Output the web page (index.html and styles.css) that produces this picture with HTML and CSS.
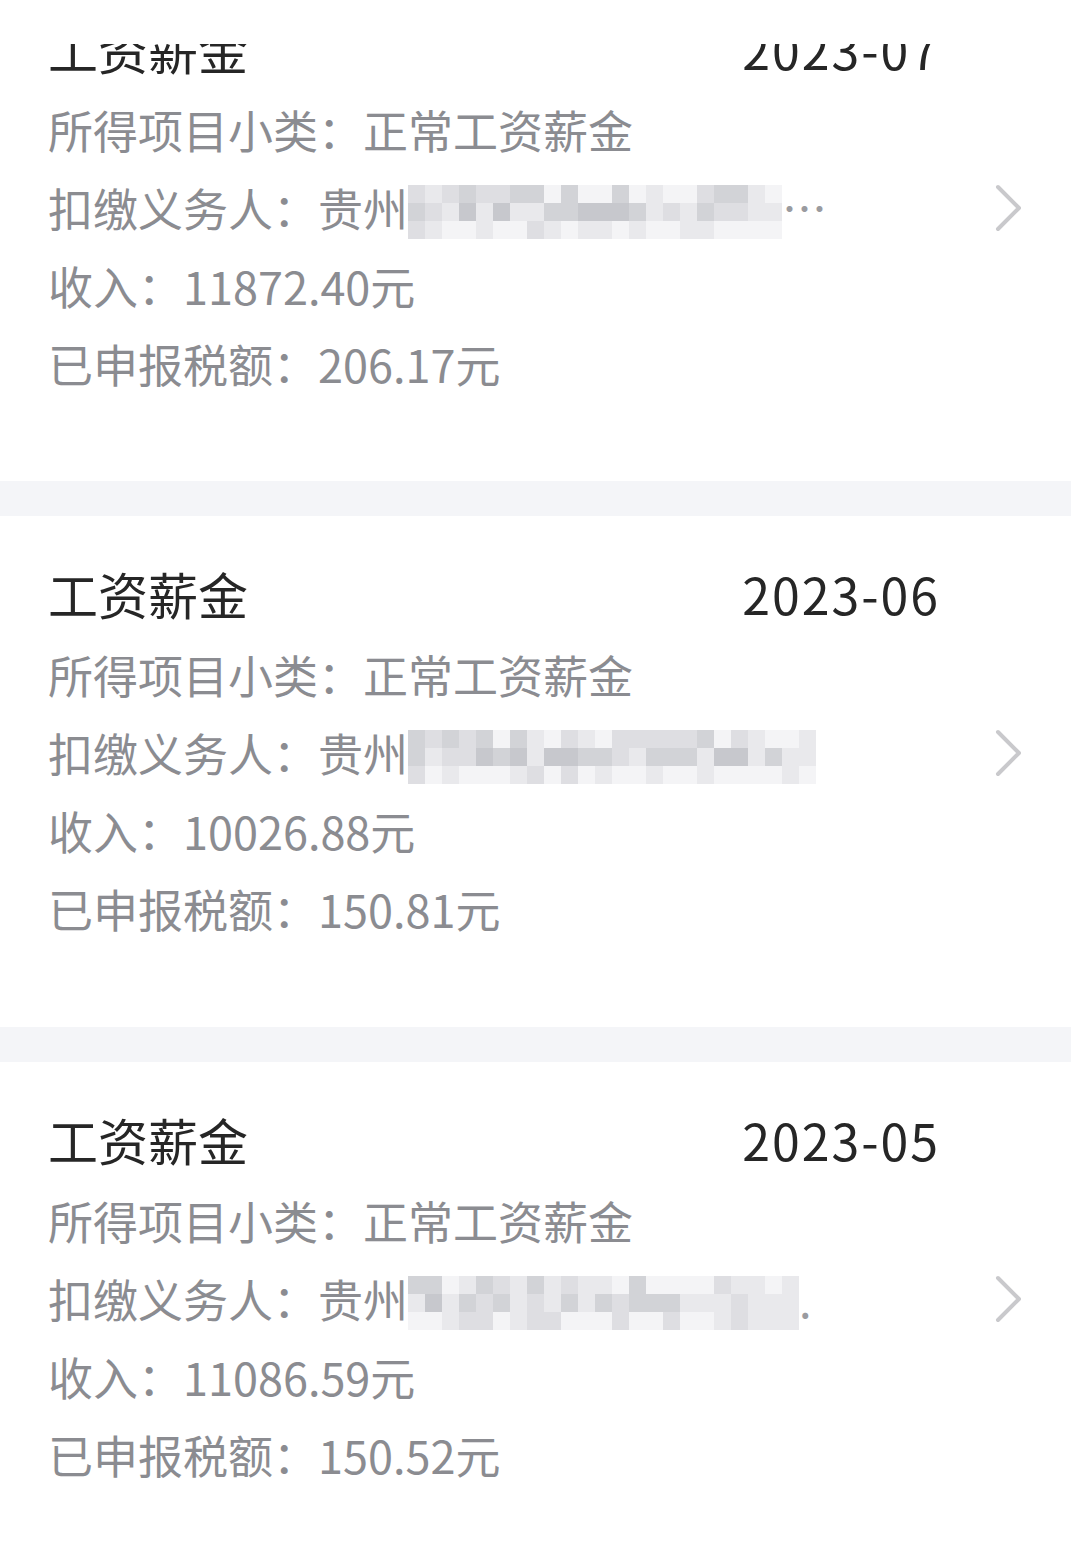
FILE: index.html
```html
<!DOCTYPE html>
<html lang="zh-CN">
<head>
  <meta charset="UTF-8">
  <meta name="viewport" content="width=device-width, initial-scale=1.0">
  <title>收入纳税明细</title>
  <link rel="stylesheet" href="styles.css">
</head>
<body>
  <div class="list">
    <div class="card card-cut">
      <div class="card-head"><span class="card-title">工资薪金</span><span class="card-date">2023-07</span></div>
      <div class="row">所得项目小类：正常工资薪金</div>
      <div class="row row-payer">
        <span>扣缴义务人：贵州<span class="mosaic" data-seed="7" data-cols="22"></span><span class="tail">…</span></span>
        <svg class="chevron" viewBox="0 0 27 48"><polyline points="3,3 24,24 3,45"/></svg>
      </div>
      <div class="row">收入：11872.40元</div>
      <div class="row">已申报税额：206.17元</div>
    </div>

    <div class="card">
      <div class="card-head"><span class="card-title">工资薪金</span><span class="card-date">2023-06</span></div>
      <div class="row">所得项目小类：正常工资薪金</div>
      <div class="row row-payer">
        <span>扣缴义务人：贵州<span class="mosaic" data-seed="19" data-cols="24"></span><span class="tail"></span></span>
        <svg class="chevron" viewBox="0 0 27 48"><polyline points="3,3 24,24 3,45"/></svg>
      </div>
      <div class="row">收入：10026.88元</div>
      <div class="row">已申报税额：150.81元</div>
    </div>

    <div class="card">
      <div class="card-head"><span class="card-title">工资薪金</span><span class="card-date">2023-05</span></div>
      <div class="row">所得项目小类：正常工资薪金</div>
      <div class="row row-payer">
        <span>扣缴义务人：贵州<span class="mosaic" data-seed="31" data-cols="23"></span><span class="tail">.</span></span>
        <svg class="chevron" viewBox="0 0 27 48"><polyline points="3,3 24,24 3,45"/></svg>
      </div>
      <div class="row">收入：11086.59元</div>
      <div class="row">已申报税额：150.52元</div>
    </div>
  </div>

  <script>
    // fill the blurred payer names with grey blocks
    document.querySelectorAll('.mosaic').forEach(box => {
      let seed = Number(box.dataset.seed);
      const cols = Number(box.dataset.cols);
      const next = () => {
        seed = (seed * 1103515245 + 12345) % 2147483648;
        return seed / 2147483648;
      };
      box.style.width = cols * 17 + 'px';
      for (let r = 0; r < 3; r++) {
        for (let c = 0; c < cols; c++) {
          const cell = document.createElement('span');
          let shade = Math.floor(next() * 4) + (r === 1 ? 1 : 0) - (r === 2 ? 1 : 0);
          if (c > cols - 3) shade = Math.min(shade, 1);
          cell.className = 'cell s' + Math.max(0, Math.min(4, shade));
          box.appendChild(cell);
        }
      }
    });
  </script>
</body>
</html>
```

FILE: styles.css
```css
body {
  margin: 0;
  font-family: "Noto Sans CJK SC", "Noto Sans", sans-serif;
  background: #f4f5f8;
}
.list {
  display: flex;
  flex-direction: column;
  gap: 35px;
}
.card {
  background: #fff;
  padding: 47px 49px 79px 48px;
}
.card-cut {
  padding-top: 44px;
  padding-bottom: 78px;
}
.card-head {
  display: flex;
  justify-content: space-between;
  align-items: center;
  height: 60px;
  padding-right: 82px;
  margin-bottom: 13px;
  color: #262626;
  font-size: 50px;
  line-height: 60px;
}
.card-cut .card-head {
  height: 34px;
  align-items: flex-end;
  overflow: hidden;
}
.card-date {
  letter-spacing: 2px;
}
.row {
  height: 78px;
  line-height: 78px;
  font-size: 45px;
  color: #8b8c91;
  white-space: nowrap;
}
.row-payer {
  display: flex;
  justify-content: space-between;
  align-items: center;
}
.mosaic {
  display: inline-flex;
  flex-wrap: wrap;
  height: 54px;
  vertical-align: middle;
  margin-top: -6px;
}
.cell {
  width: 17px;
  height: 18px;
}
.s0 { background: #f4f4f6; }
.s1 { background: #e9e9ec; }
.s2 { background: #dedee2; }
.s3 { background: #d2d3d7; }
.s4 { background: #c7c8cd; }
.tail {
  color: #9a9ba0;
}
.chevron {
  width: 27px;
  height: 48px;
  fill: none;
  stroke: #c9c9cc;
  stroke-width: 4;
  stroke-linecap: round;
  stroke-linejoin: round;
}
```
